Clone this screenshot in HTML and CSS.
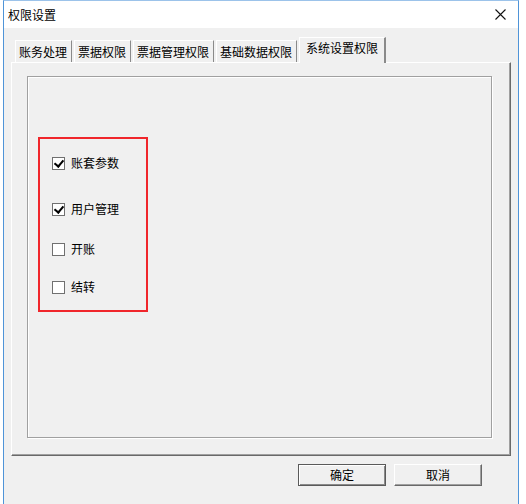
FILE: index.html
```html
<!DOCTYPE html>
<html>
<head lang="zh">
  <meta charset="UTF-8">
  <title>权限设置</title>
  <link rel="stylesheet" href="styles.css">
</head>
<body>
<div class="dlg">
  <div class="dlg-title">
    <span>权限设置</span>
    <svg class="dlg-close" width="11" height="11" viewBox="0 0 11 11">
      <path d="M0.5 0.5 L10.5 10.5 M10.5 0.5 L0.5 10.5" stroke="#111" stroke-width="1.1" fill="none"/>
    </svg>
  </div>
  <div class="dlg-body">
    <div class="tabs">
      <div class="tab">账务处理</div>
      <div class="tab">票据权限</div>
      <div class="tab">票据管理权限</div>
      <div class="tab">基础数据权限</div>
      <div class="tab tab-on">系统设置权限</div>
    </div>
    <div class="panel">
      <div class="group">
        <div class="mark-box">
          <label class="opt opt-1"><span class="chk on"></span>账套参数</label>
          <label class="opt opt-2"><span class="chk on"></span>用户管理</label>
          <label class="opt opt-3"><span class="chk"></span>开账</label>
          <label class="opt opt-4"><span class="chk"></span>结转</label>
        </div>
      </div>
    </div>
    <div class="dlg-btns">
      <a href="javascript:void(0);" class="btn btn-default">确定</a>
      <a href="javascript:void(0);" class="btn">取消</a>
    </div>
  </div>
</div>
</body>
</html>
```

FILE: styles.css
```css
* {
  box-sizing: border-box;
}

body {
  margin: 0px;
  background: #ffffff;
  font-family: "Noto Sans CJK SC", "Liberation Sans", sans-serif;
  font-size: 12px;
  color: #000000;
}

a {
  text-decoration: none;
  color: #000000;
}

.dlg {
  margin-left: 3px;
  width: 516px;
  height: 504px;
  border-left: 1px solid #4f94d8;
  border-right: 1px solid #4f94d8;
  border-top: 1px solid #9cc3ea;
  display: flex;
  flex-direction: column;
}

.dlg-title {
  height: 27px;
  background: #ffffff;
  display: flex;
  align-items: center;
  justify-content: space-between;
  padding: 0px 12px 0px 4px;
  line-height: 16px;
}

.dlg-close {
  display: block;
}

.dlg-body {
  flex: 1;
  background: #f0f0f0;
  padding: 9px 7px 0px 7px;
}

.tabs {
  display: flex;
  align-items: flex-end;
  gap: 2px;
  padding-left: 4px;
  height: 25px;
}

.tab {
  height: 22px;
  line-height: 21px;
  padding: 0px 4px 0px 3px;
  border-top: 1px solid #ffffff;
  border-left: 1px solid #ffffff;
  border-right: 1px solid #8a8a8a;
  white-space: nowrap;
}

.tab-on {
  height: 26px;
  margin-bottom: -1px;
  line-height: 20px;
  padding: 0px 6px 4px 6px;
  background: #f0f0f0;
  border-right: 2px solid #8a8a8a;
  position: relative;
  z-index: 2;
}

.panel {
  height: 394px;
  border-top: 1px solid #ffffff;
  border-left: 1px solid #ffffff;
  border-right: 1px solid #696969;
  border-bottom: 1px solid #696969;
  box-shadow: inset -1px -1px 0px #a0a0a0;
  padding: 13px 18px 16px 15px;
}

.group {
  height: 362px;
  border: 1px solid #a0a0a0;
  box-shadow: 1px 1px 0px #ffffff, inset 1px 1px 0px #ffffff;
  padding: 60px 0px 0px 10px;
}

.mark-box {
  width: 110px;
  border: 2px solid #f0262b;
  padding: 16px 0px 15px 12px;
}

.opt {
  display: flex;
  align-items: center;
  height: 16px;
  line-height: 16px;
  white-space: nowrap;
}

.opt-2 {
  margin-top: 30px;
}

.opt-3 {
  margin-top: 24px;
}

.opt-4 {
  margin-top: 22px;
}

.chk {
  width: 13px;
  height: 13px;
  margin-right: 6px;
  border: 1px solid #707070;
  background: #ffffff;
  position: relative;
  flex: none;
}

.chk.on::after {
  content: "";
  position: absolute;
  left: 3px;
  top: 0px;
  width: 4px;
  height: 7px;
  border-right: 2px solid #000000;
  border-bottom: 2px solid #000000;
  transform: rotate(40deg);
}

.dlg-btns {
  display: flex;
  justify-content: flex-end;
  gap: 8px;
  margin-top: 8px;
  padding-right: 29px;
}

.btn {
  display: block;
  width: 88px;
  height: 22px;
  line-height: 19px;
  text-align: center;
  background: #f0f0f0;
  border-top: 1px solid #ffffff;
  border-left: 1px solid #ffffff;
  border-right: 1px solid #696969;
  border-bottom: 1px solid #696969;
  box-shadow: inset -1px -1px 0px #a0a0a0;
}

.btn-default {
  border: 1px solid #5a5a5a;
  box-shadow: inset 1px 1px 0px #ffffff, inset -1px -1px 0px #8a8a8a;
}
```
